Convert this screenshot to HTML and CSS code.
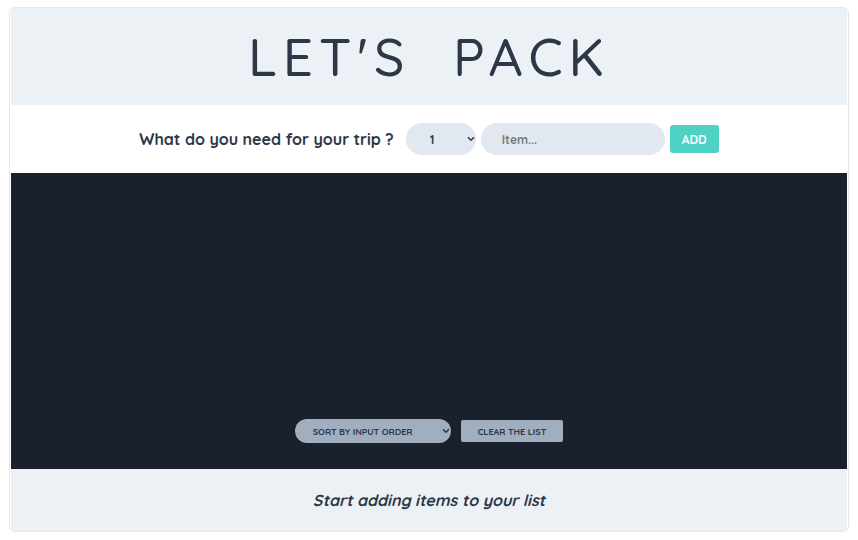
FILE: index.html
```html
<!DOCTYPE html>
<html lang="en">
<head>
  <meta charset="utf-8">
  <meta name="viewport" content="width=device-width, initial-scale=1">
  <title>Let's Pack</title>
  <link rel="stylesheet" href="styles.css">
</head>
<body>
  <div class="app">
    <header class="header">
      <h1 class="title">Let's Pack</h1>
    </header>
    <form class="add-form">
      <label class="question" for="item">What do you need for your trip ?</label>
      <div class="fields">
        <select class="quantity" aria-label="Quantity">
          <option>1</option>
          <option>2</option>
          <option>3</option>
        </select>
        <input class="item" id="item" type="text" placeholder="Item...">
        <button class="add" type="submit">Add</button>
      </div>
    </form>
    <main class="list">
      <div class="actions">
        <select class="sort" aria-label="Sort">
          <option>SORT BY INPUT ORDER</option>
          <option>SORT BY DESCRIPTION</option>
          <option>SORT BY PACKED STATUS</option>
        </select>
        <button class="clear" type="button">Clear the list</button>
      </div>
    </main>
    <footer class="footer">
      <em>Start adding items to your list</em>
    </footer>
  </div>
</body>
</html>
```

FILE: styles.css
```css
* {
  box-sizing: border-box;
}

body {
  margin: 0;
  min-height: 100vh;
  padding: 7px 9px 8px;
  display: flex;
  background: #fff;
  color: #2d3748;
  font-family: Quicksand, Lato, sans-serif;
  font-weight: 700;
}

button,
input,
select {
  border: 0;
  color: inherit;
  font: inherit;
}

select {
  appearance: none;
  background-image: url("data:image/svg+xml,%3Csvg xmlns='http://www.w3.org/2000/svg' width='8' height='6' viewBox='0 0 8 6'%3E%3Cpath d='M1 1.2l3 3 3-3' fill='none' stroke='%232d3748' stroke-width='1.5'/%3E%3C/svg%3E");
  background-repeat: no-repeat;
  background-position: right 1px center;
}

.app {
  flex: 1;
  display: flex;
  flex-direction: column;
  padding: 0 1px;
  border: 1px solid #e6e9ec;
  border-radius: 6px;
  overflow: hidden;
}

.header {
  padding: 16px;
  background: #ecf1f5;
  text-align: center;
}

.title {
  margin: 0;
  font-size: 53px;
  line-height: 65px;
  font-weight: 500;
  letter-spacing: 6px;
  word-spacing: 22px;
  text-transform: uppercase;
}

.add-form {
  display: flex;
  align-items: center;
  justify-content: center;
  gap: 12px;
  padding: 18px 16px;
}

.question {
  font-size: 16px;
}

.fields {
  display: flex;
  align-items: center;
  gap: 5px;
  font-size: 12px;
}

.quantity,
.item {
  height: 32px;
  border-radius: 16px;
  background-color: #e2e8f0;
}

.quantity {
  width: 70px;
  padding: 0 0 0 24px;
}

.item {
  width: 184px;
  padding: 0 21px;
}

.item::placeholder {
  color: #757980;
}

.add {
  height: 28px;
  padding: 0 12px;
  border-radius: 3px;
  background: #4fd1c5;
  color: #fff;
  text-transform: uppercase;
}

.list {
  flex: 1;
  display: flex;
  flex-direction: column;
  justify-content: flex-end;
  padding: 26px 16px;
  background: #1a202c;
}

.actions {
  display: flex;
  align-items: center;
  justify-content: center;
  gap: 10px;
  font-size: 9px;
}

.sort,
.clear {
  background-color: #a0aec0;
}

.sort {
  width: 156px;
  height: 24px;
  padding: 0 0 0 18px;
  border-radius: 12px;
}

.clear {
  height: 22px;
  padding: 0 17px;
  border-radius: 2px;
  text-transform: uppercase;
}

.footer {
  padding: 20px 16px;
  background: #ecf1f5;
  font-size: 16px;
  line-height: 22px;
  text-align: center;
}
```
